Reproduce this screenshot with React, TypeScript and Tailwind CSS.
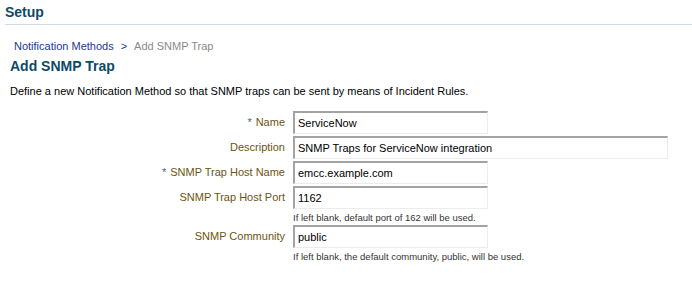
import React from 'react'

const font = { fontFamily: '"Liberation Sans", Arial, sans-serif' }

type Campo = { label: string; value: string; required?: boolean; wide?: boolean; help?: string }

const CAMPOS: Campo[] = [
  { label: 'Name', value: 'ServiceNow', required: true },
  { label: 'Description', value: 'SNMP Traps for ServiceNow integration', wide: true },
  { label: 'SNMP Trap Host Name', value: 'emcc.example.com', required: true },
  { label: 'SNMP Trap Host Port', value: '1162', help: 'If left blank, default port of 162 will be used.' },
  { label: 'SNMP Community', value: 'public', help: 'If left blank, the default community, public, will be used.' },
]

function Row({ c }: { c: Campo }) {
  return (
    <div className="flex items-start">
      <div className="w-[286px] shrink-0 h-[23px] flex items-center justify-end pr-[1px] text-[11px] text-[#6d5510]">
        {c.required && <span className="text-[#3a6b98] mr-[4px]">*</span>}
        {c.label}
      </div>
      <div className="ml-[7px] flex flex-col">
        <div
          className={`h-[23px] flex items-center pl-[3px] text-[11px] text-black bg-white border-t-2 border-l-2 border-r border-b border-t-[#a3a3a3] border-l-[#a3a3a3] border-r-[#ececec] border-b-[#ececec] ${c.wide ? 'w-[375px]' : 'w-[195px]'}`}
        >
          {c.value}
        </div>
        {c.help && <div className="text-[9.5px] text-[#333] mt-[3px] leading-[11px]">{c.help}</div>}
      </div>
    </div>
  )
}

export default function App() {
  return (
    <div className="w-[692px] h-[281px] bg-white overflow-hidden" style={font}>
      <div className="ml-[5px] pt-[4px] pb-[4px] border-b border-[#cddbe6]">
        <h1 className="text-[14px] font-bold text-[#0d4a66] leading-[16px]">Setup</h1>
      </div>

      <div className="pl-[14px] pt-[14px] text-[11px] leading-[14px]">
        <span className="text-[#1a3a8c]">Notification Methods</span>
        <span className="text-[#1a3a8c] mx-[7px]">&gt;</span>
        <span className="text-[#8a8a8a]">Add SNMP Trap</span>
      </div>
      <h2 className="pl-[10px] pt-[4px] text-[14px] font-bold text-[#0d4a66] leading-[18px]">Add SNMP Trap</h2>
      <p className="pl-[10px] pt-[9px] text-[11px] text-black leading-[14px]">
        Define a new Notification Method so that SNMP traps can be sent by means of Incident Rules.
      </p>

      <div className="mt-[13px] flex flex-col gap-[2px]">
        {CAMPOS.map((c) => <Row key={c.label} c={c} />)}
      </div>
    </div>
  )
}
